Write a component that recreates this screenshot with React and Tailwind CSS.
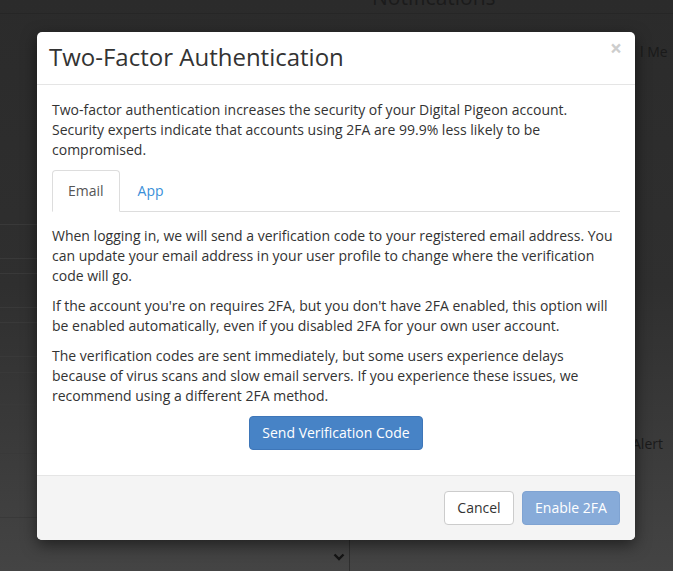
import React from "react";

export default function App() {
  return (
    <div className="relative w-[673px] h-[571px] overflow-hidden bg-gradient-to-b from-[#2b2b2b] via-[#2f2f2f] to-[#444444] font-['Open_Sans','Liberation_Sans',sans-serif]">
      {/* dimmed page underneath */}
      <div className="flex flex-col h-full">
        <div className="h-[14px] border-b border-[#262626] flex">
          <div className="ml-[372px] -mt-[17px] text-[21px] leading-[28px] text-[#1b1b1b] whitespace-nowrap">
            Notifications
          </div>
        </div>
        <div className="flex flex-1">
          <div className="w-[350px] flex flex-col">
            <div className="h-[211px] border-b border-[#393939]" />
            <div className="h-[34px] border-b border-[#393939]" />
            <div className="h-[15px] border-b border-[#393939]" />
            <div className="h-[34px] border-b border-[#393939]" />
            <div className="h-[15px] border-b border-[#393939]" />
            <div className="h-[34px] border-b border-[#393939]" />
            <div className="h-[16px] border-b border-[#393939]" />
            <div className="h-[32px] border-b border-[#393939]" />
            <div className="h-[16px] border-b border-[#393939]" />
            <div className="h-[33px] border-b border-[#393939]" />
            <div className="h-[64px] border-b border-[#393939]" />
            <div className="flex-1 flex items-end justify-end border-r border-[#2f2f2f] pb-[10px] pr-[4px]">
              <svg width="12" height="8" viewBox="0 0 12 8">
                <path d="M1.5 1.5 L6 6 L10.5 1.5" fill="none" stroke="#151515" strokeWidth="2.4" />
              </svg>
            </div>
          </div>
          <div className="flex-1 flex flex-col">
            <div className="mt-[28px] ml-[290px] text-[14px] leading-[20px] text-[#1a1a1a] whitespace-nowrap">l Me</div>
            <div className="mt-[372px] ml-[282px] text-[14px] leading-[20px] text-[#1a1a1a] whitespace-nowrap">Alert</div>
          </div>
        </div>
      </div>

      {/* modal */}
      <div className="absolute left-[37px] top-[32px] w-[598px] bg-white rounded-[5px] shadow-[0_5px_15px_rgba(0,0,0,0.5)] text-[#333333]">
        <div className="h-[53px] border-b border-[#e5e5e5] flex items-center justify-between pl-[12px] pr-[13px]">
          <h4 className="text-[24px] leading-[28px] text-[#333333] font-normal -mt-[2px]">Two-Factor Authentication</h4>
          <span className="text-[21px] leading-[21px] font-bold text-[#cdcdcd] -mt-[19px]">×</span>
        </div>
        <div className="px-[15px] pt-[15px] pb-[15px] text-[14px] leading-[20px]">
          <p className="mb-[10px]">
            Two-factor authentication increases the security of your Digital Pigeon account. Security experts indicate that accounts using 2FA are 99.9% less likely to be compromised.
          </p>
          <div className="flex border-b border-[#dddddd]">
            <div className="-mb-px mr-[2px] px-[15px] py-[10px] border border-[#dddddd] border-b-white rounded-t-[4px] bg-white text-[#555555]">
              Email
            </div>
            <div className="-mb-px px-[15px] py-[10px] border border-transparent text-[#3a8fd8]">App</div>
          </div>
          <div className="pt-[14px]">
            <p className="mb-[10px]">
              When logging in, we will send a verification code to your registered email address. You can update your email address in your user profile to change where the verification code will go.
            </p>
            <p className="mb-[10px]">
              If the account you're on requires 2FA, but you don't have 2FA enabled, this option will be enabled automatically, even if you disabled 2FA for your own user account.
            </p>
            <p className="mb-[10px]">
              The verification codes are sent immediately, but some users experience delays because of virus scans and slow email servers. If you experience these issues, we recommend using a different 2FA method.
            </p>
            <div className="flex justify-center mt-[1px] mb-[10px]">
              <button className="h-[34px] px-[12px] rounded-[4px] bg-[#4783c6] border border-[#3e76b8] text-white text-[14px] leading-[20px]">
                Send Verification Code
              </button>
            </div>
          </div>
        </div>
        <div className="h-[65px] border-t border-[#e5e5e5] bg-[#f4f4f4] rounded-b-[5px] flex items-center justify-end gap-[8px] px-[15px]">
          <button className="h-[34px] w-[70px] rounded-[4px] bg-white border border-[#cccccc] text-[#333333] text-[14px] leading-[20px]">
            Cancel
          </button>
          <button className="h-[34px] w-[98px] rounded-[4px] bg-[#87abd9] border border-[#7fa3d2] text-white text-[14px] leading-[20px]">
            Enable 2FA
          </button>
        </div>
      </div>
    </div>
  );
}
